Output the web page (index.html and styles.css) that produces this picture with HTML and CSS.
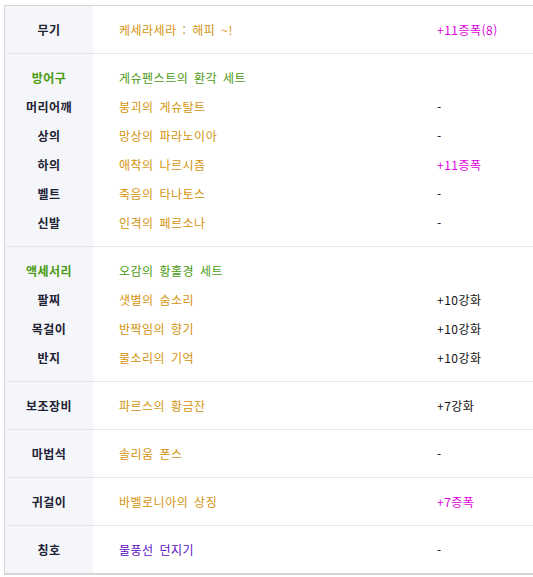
FILE: index.html
```html
<!DOCTYPE html>
<html lang="ko">
<head>
    <meta charset="UTF-8">
    <meta name="viewport" content="width=device-width, initial-scale=1.0">
    <title>장비</title>
    <link rel="stylesheet" href="styles.css">
</head>
<body>
    <table class="equip">
        <tr>
            <th><div class="line">무기</div></th>
            <td class="name"><div class="line item">케세라세라 : 해피 ~!</div></td>
            <td class="opt"><div class="line amp">+11증폭(8)</div></td>
        </tr>
        <tr>
            <th>
                <div class="line set">방어구</div>
                <div class="line">머리어깨</div>
                <div class="line">상의</div>
                <div class="line">하의</div>
                <div class="line">벨트</div>
                <div class="line">신발</div>
            </th>
            <td class="name">
                <div class="line set">게슈펜스트의 환각 세트</div>
                <div class="line item">붕괴의 게슈탈트</div>
                <div class="line item">망상의 파라노이아</div>
                <div class="line item">애착의 나르시즘</div>
                <div class="line item">죽음의 타나토스</div>
                <div class="line item">인격의 페르소나</div>
            </td>
            <td class="opt">
                <div class="line"></div>
                <div class="line">-</div>
                <div class="line">-</div>
                <div class="line amp">+11증폭</div>
                <div class="line">-</div>
                <div class="line">-</div>
            </td>
        </tr>
        <tr>
            <th>
                <div class="line set">액세서리</div>
                <div class="line">팔찌</div>
                <div class="line">목걸이</div>
                <div class="line">반지</div>
            </th>
            <td class="name">
                <div class="line set">오감의 황홀경 세트</div>
                <div class="line item">샛별의 숨소리</div>
                <div class="line item">반짝임의 향기</div>
                <div class="line item">물소리의 기억</div>
            </td>
            <td class="opt">
                <div class="line"></div>
                <div class="line">+10강화</div>
                <div class="line">+10강화</div>
                <div class="line">+10강화</div>
            </td>
        </tr>
        <tr>
            <th><div class="line">보조장비</div></th>
            <td class="name"><div class="line item">파르스의 황금잔</div></td>
            <td class="opt"><div class="line">+7강화</div></td>
        </tr>
        <tr>
            <th><div class="line">마법석</div></th>
            <td class="name"><div class="line item">솔리움 폰스</div></td>
            <td class="opt"><div class="line">-</div></td>
        </tr>
        <tr>
            <th><div class="line">귀걸이</div></th>
            <td class="name"><div class="line item">바벨로니아의 상징</div></td>
            <td class="opt"><div class="line amp">+7증폭</div></td>
        </tr>
        <tr>
            <th><div class="line">칭호</div></th>
            <td class="name"><div class="line title">물풍선 던지기</div></td>
            <td class="opt"><div class="line">-</div></td>
        </tr>
    </table>
</body>
</html>
```

FILE: styles.css
```css
body {
    margin: 5px 0 0 4px;
    font-family: 'Noto Sans CJK KR', 'Noto Sans', sans-serif;
    font-size: 12px;
    letter-spacing: 0.5px;
    word-spacing: 2px;
    color: #111;
    background-color: #ffffff;
}

.equip {
    width: 100%;
    border-collapse: collapse;
    border-top: 1px solid #d2d2da;
    border-left: 1px solid #d2d2da;
    border-bottom: 2px solid #d6d6d6;
}

.equip tr {
    border-top: 1px solid #e6e6e8;
}

.equip tr:first-child {
    border-top: none;
}

.equip th,
.equip td {
    padding: 9px 0;
    vertical-align: top;
    text-align: left;
}

.equip th {
    width: 88px;
    background-color: #f4f6fa;
    text-align: center;
    font-weight: bold;
    color: #222233;
}

.equip .name {
    width: 291px;
    padding-left: 26px;
}

.equip .opt {
    padding-left: 27px;
}

.line {
    height: 29px;
    line-height: 29px;
    white-space: nowrap;
}

.set {
    color: #4a9a12;
}

.item {
    color: #d4930b;
}

.title {
    color: #5a10c8;
}

.amp {
    color: #dd00dd;
}
```
